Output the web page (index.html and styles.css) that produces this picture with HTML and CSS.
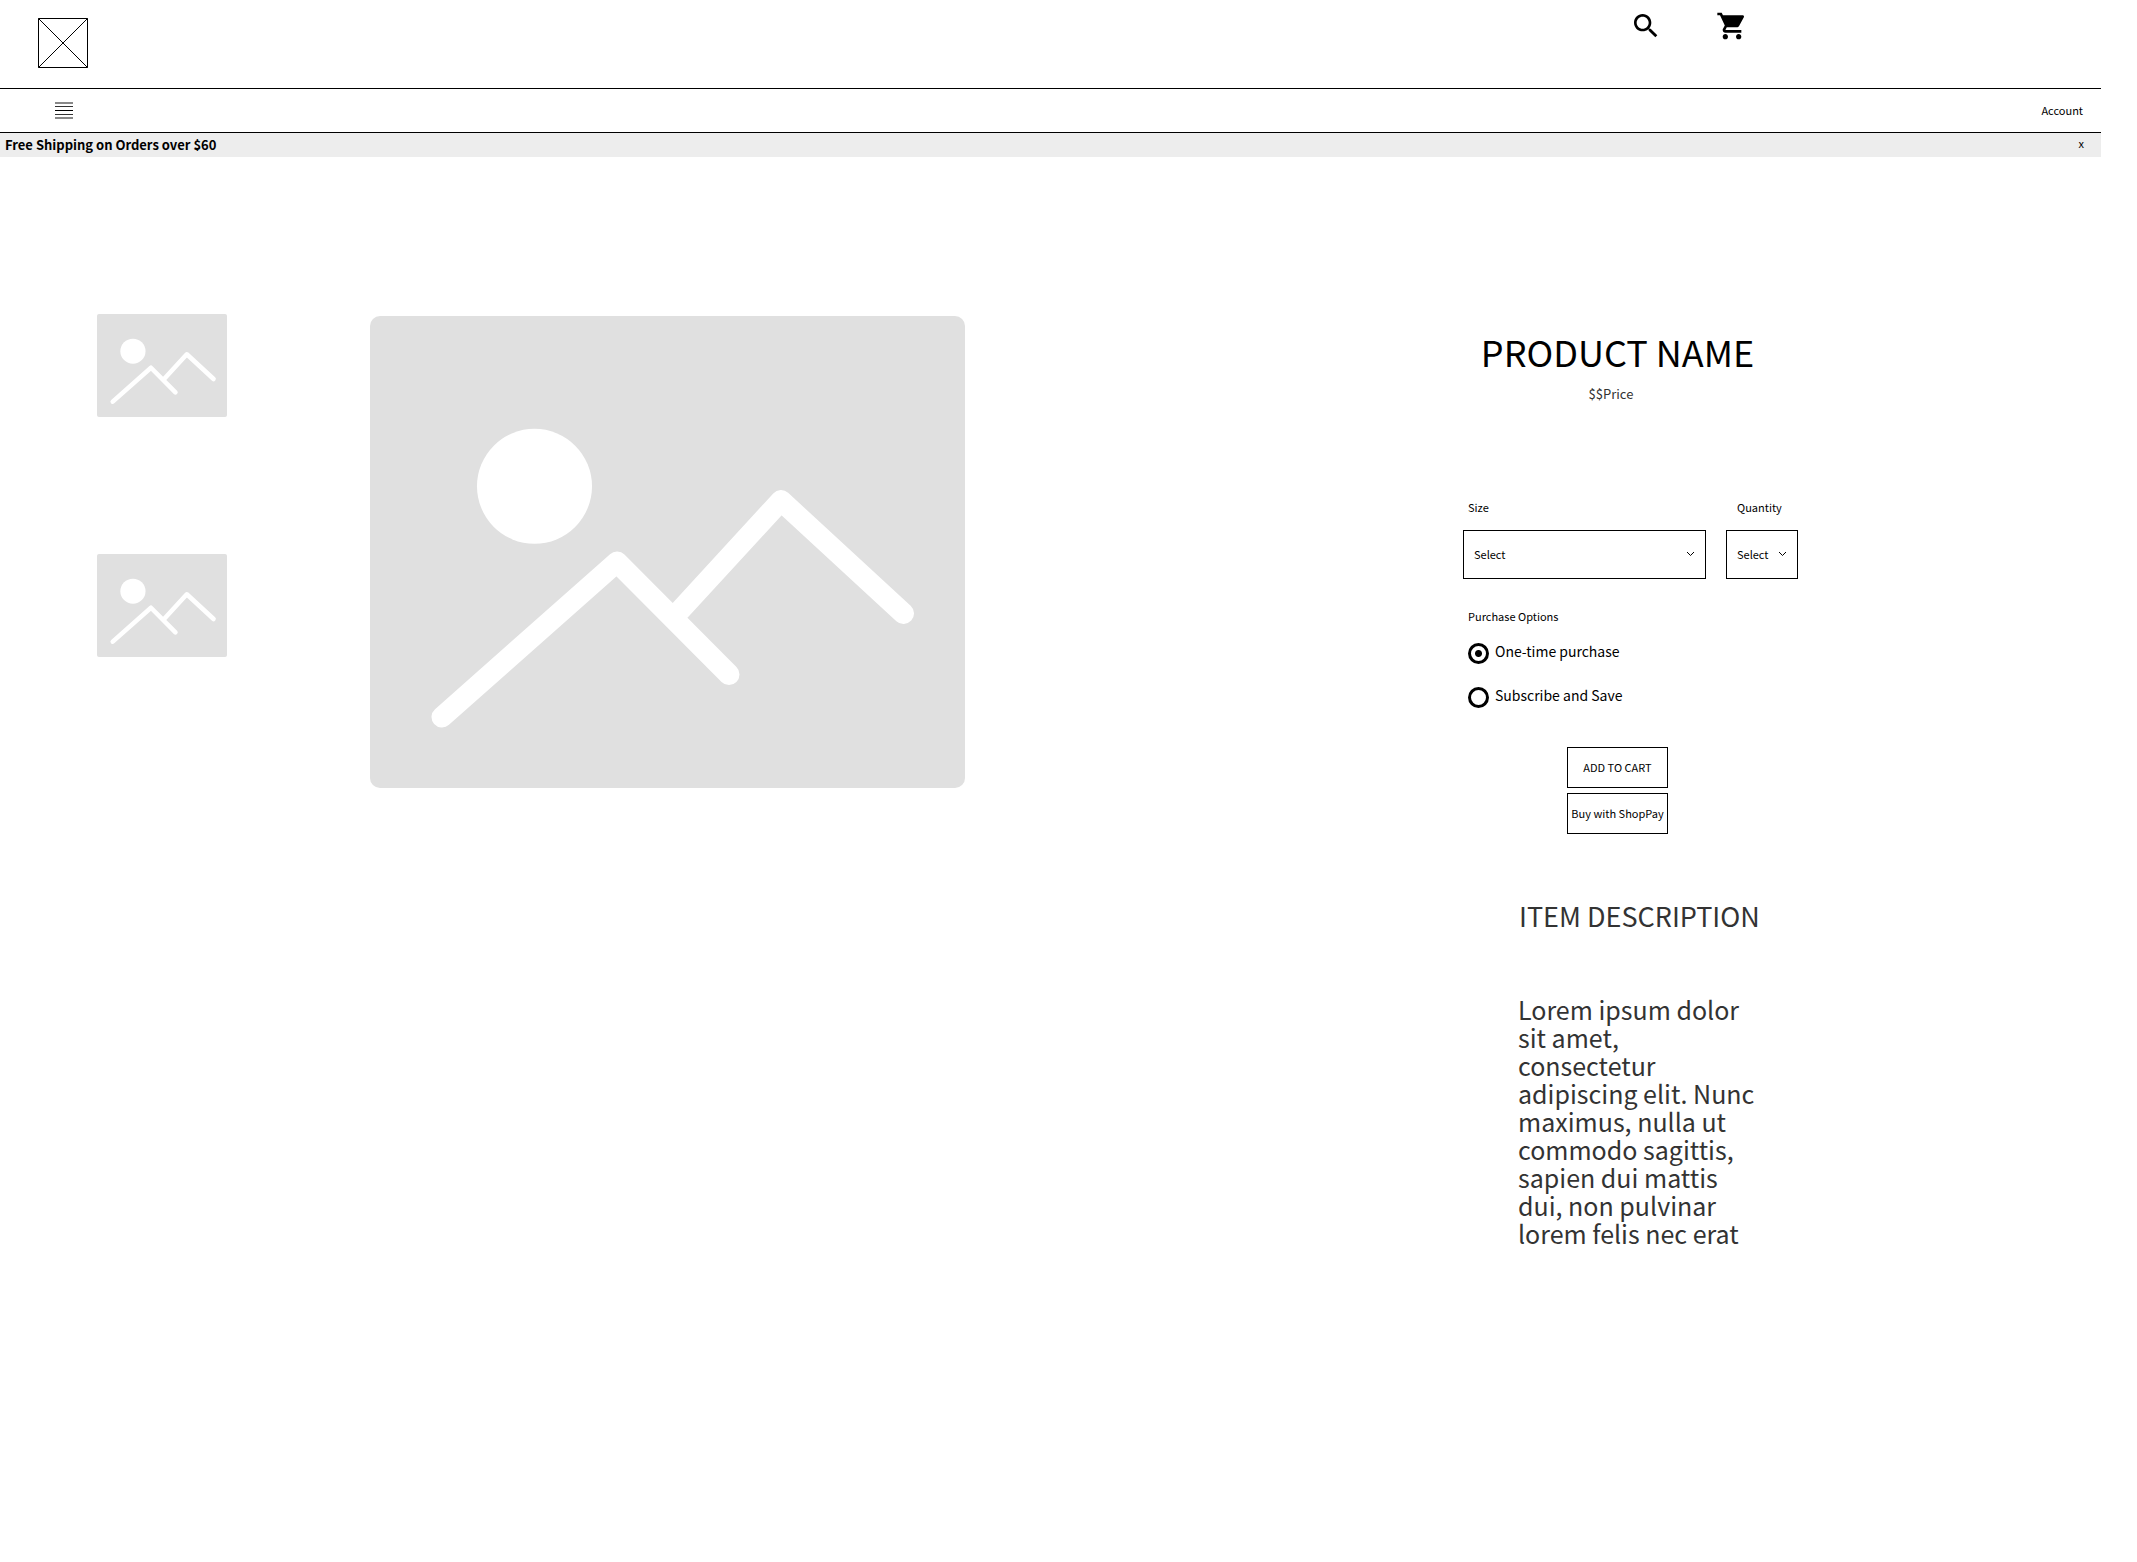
FILE: index.html
```html
<!DOCTYPE html>
<html lang="en">
<head>
<meta charset="utf-8">
<meta name="viewport" content="width=device-width, initial-scale=1">
<title>Product Name</title>
<link rel="stylesheet" href="styles.css">
</head>
<body>
<svg class="sprite" aria-hidden="true">
  <symbol id="picture" viewBox="0 0 595 472">
    <circle cx="164.500" cy="170.300" r="57.500" fill="#fff"/>
    <path d="M72 401 247 246 359 358.500M304 301 411 184.500 533.500 297.500" fill="none" stroke="#fff" stroke-width="21" stroke-linecap="round" stroke-linejoin="round"/>
  </symbol>
</svg>
<header class="header">
  <a class="logo" href="#" aria-label="Home">
    <svg width="50" height="50" viewBox="0 0 50 50" fill="none" stroke="#000"><path d="M.5.5h49v49H.5zM.5.5l49 49M49.500.5l-49 49"/></svg>
  </a>
  <div class="actions">
    <button class="icon-button" type="button" aria-label="Search">
      <svg width="32" height="32" viewBox="0 0 24 24"><path d="M15.500 14h-.79l-.28-.27C15.410 12.590 16 11.110 16 9.500 16 5.910 13.090 3 9.500 3S3 5.910 3 9.500 5.910 16 9.500 16c1.610 0 3.090-.59 4.230-1.570l.27.28v.79l5 4.990L20.490 19l-4.990-5zm-6 0C7.010 14 5 11.990 5 9.500S7.010 5 9.500 5 14 7.010 14 9.500 11.990 14 9.500 14z"/></svg>
    </button>
    <button class="icon-button" type="button" aria-label="Cart">
      <svg width="32" height="32" viewBox="0 0 24 24"><path d="M7 18c-1.100 0-1.990.9-1.990 2S5.900 22 7 22s2-.9 2-2-.9-2-2-2zM1 2v2h2l3.600 7.590-1.350 2.450c-.16.28-.25.61-.25.96 0 1.100.9 2 2 2h12v-2H7.420c-.14 0-.25-.11-.25-.25l.03-.12.9-1.630h7.450c.75 0 1.410-.41 1.750-1.030l3.580-6.490c.08-.14.12-.31.12-.48 0-.55-.45-1-1-1H5.210l-.94-2H1zm16 16c-1.100 0-1.990.9-1.990 2s.89 2 1.990 2 2-.9 2-2-.9-2-2-2z"/></svg>
    </button>
  </div>
</header>
<nav class="nav">
  <button class="icon-button" type="button" aria-label="Menu">
    <svg width="18" height="18" viewBox="0 0 18 18"><path fill="#888" d="M0 0h18v2H0zM0 15h18v2H0z"/><path fill="#333" d="M0 4h18v1H0zM0 12h18v1H0z"/><path d="M0 8h18v1H0z"/></svg>
  </button>
  <a class="account" href="#">Account</a>
</nav>
<aside class="banner">
  <strong>Free Shipping on Orders over $60</strong>
  <button class="close" type="button" aria-label="Dismiss">x</button>
</aside>
<main class="product">
  <div class="thumbs">
    <svg class="picture thumb" viewBox="0 0 595 472"><use href="#picture"/></svg>
    <svg class="picture thumb" viewBox="0 0 595 472"><use href="#picture"/></svg>
  </div>
  <svg class="picture photo" viewBox="0 0 595 472"><use href="#picture"/></svg>
  <section class="details">
    <div class="purchase">
      <h1 class="name">PRODUCT NAME</h1>
      <p class="price">$$Price</p>
    </div>
    <form class="form">
      <div class="fields">
        <div class="field">
          <label class="label" for="size">Size</label>
          <div class="select-box">
            <select class="select" id="size"><option>Select</option></select>
            <svg class="chevron" width="9" height="6" viewBox="0 0 9 6"><path d="M1 1l3.500 3.500L8 1"/></svg>
          </div>
        </div>
        <div class="field">
          <label class="label label-quantity" for="quantity">Quantity</label>
          <div class="select-box">
            <select class="select" id="quantity"><option>Select</option></select>
            <svg class="chevron" width="9" height="6" viewBox="0 0 9 6"><path d="M1 1l3.500 3.500L8 1"/></svg>
          </div>
        </div>
      </div>
      <fieldset class="options">
        <legend class="label">Purchase Options</legend>
        <div class="choices">
          <label class="choice"><input class="radio" type="radio" name="plan" checked>One-time purchase</label>
          <label class="choice"><input class="radio" type="radio" name="plan">Subscribe and Save</label>
        </div>
      </fieldset>
      <div class="buttons">
        <button class="button" type="button">ADD TO CART</button>
        <button class="button" type="button">Buy with ShopPay</button>
      </div>
    </form>
    <div class="description">
      <h2 class="subtitle">ITEM DESCRIPTION</h2>
      <p class="text">Lorem ipsum dolor sit amet, consectetur adipiscing elit. Nunc maximus, nulla ut commodo sagittis, sapien dui mattis dui, non pulvinar lorem felis nec erat</p>
    </div>
  </section>
</main>
</body>
</html>
```
FILE: styles.css
```css
* {
  box-sizing: border-box;
}

body {
  margin: 0;
  padding-right: 36px;
  background: #fff;
  color: #000;
  font-family: "Noto Sans CJK SC", "Noto Sans", sans-serif;
  font-size: 11px;
  line-height: 18px;
}

h1,
h2,
p {
  margin: 0;
  font-weight: 400;
}

a {
  color: inherit;
  text-decoration: none;
}

button,
select {
  padding: 0;
  border: 0;
  border-radius: 0;
  background: none;
  color: inherit;
  font: inherit;
}

svg {
  display: block;
}

.sprite {
  display: none;
}

.header {
  display: flex;
  align-items: flex-start;
  justify-content: space-between;
  padding: 10px 353px 20px 38px;
  border-bottom: 1px solid #000;
}

.logo {
  padding-top: 8px;
}

.actions {
  display: flex;
  gap: 54px;
}

.nav {
  display: flex;
  align-items: flex-start;
  justify-content: space-between;
  padding: 13px 18px 12px 55px;
  border-bottom: 1px solid #000;
}

.account {
  line-height: 16px;
}

.banner {
  display: flex;
  align-items: flex-start;
  justify-content: space-between;
  padding: 2px 17px 2px 5px;
  background: #ededed;
  font-size: 13px;
  line-height: 20px;
}

.close {
  font-size: 11px;
  line-height: 16px;
}

.product {
  display: flex;
  align-items: flex-start;
  padding: 157px 303px 60px 97px;
}

.picture {
  background: #e0e0e0;
}

.thumbs {
  display: flex;
  flex: none;
  flex-direction: column;
  gap: 137px;
  width: 130px;
  margin-right: 143px;
}

.thumb {
  width: 100%;
  border-radius: 2px;
}

.photo {
  flex: 0 1 595px;
  min-width: 0;
  margin-top: 2px;
  border-radius: 10px;
}

.details {
  flex: none;
  width: 335px;
  margin: 11px 0 0 auto;
}

.purchase {
  padding-right: 26px;
  text-align: center;
}

.name {
  font-size: 36px;
  line-height: 52px;
}

.price {
  margin-top: 7px;
  padding-right: 13px;
  color: #333;
  font-size: 13px;
  line-height: 20px;
}

.form {
  margin-top: 94px;
}

.fields {
  display: grid;
  grid-template-columns: 1fr 72px;
  gap: 20px;
}

.label {
  display: block;
  padding: 0 0 0 5px;
}

.label-quantity {
  padding-left: 11px;
}

.select-box {
  position: relative;
  margin-top: 14px;
}

.select {
  display: block;
  width: 100%;
  height: 49px;
  padding: 0 0 2px 10px;
  border: 1px solid #000;
  appearance: none;
}

.chevron {
  position: absolute;
  top: 21px;
  right: 11px;
  fill: none;
  stroke: #000;
  pointer-events: none;
}

.options {
  margin: 28px 0 0;
  padding: 0;
  border: 0;
}

.choices {
  display: flex;
  flex-direction: column;
  gap: 19px;
  padding: 14px 0 0 5px;
}

.choice {
  display: flex;
  align-items: flex-start;
  gap: 6px;
  font-size: 14px;
  line-height: 24px;
}

.radio {
  width: 21px;
  height: 21px;
  margin: 4px 0 0;
  border: 3px solid #000;
  border-radius: 50%;
  appearance: none;
}

.radio:checked {
  background: radial-gradient(circle, #000 3px, transparent 4px);
}

.buttons {
  display: flex;
  flex-direction: column;
  align-items: center;
  gap: 5px;
  margin-top: 39px;
  padding-right: 26px;
}

.button {
  width: 101px;
  height: 41px;
  padding-bottom: 2px;
  border: 1px solid #000;
  white-space: nowrap;
}

.description {
  width: 240px;
  margin: 62px 0 0 55px;
  color: #333;
}

.subtitle {
  padding-left: 1px;
  font-size: 27px;
  line-height: 40px;
  white-space: nowrap;
}

.text {
  margin-top: 59px;
  font-size: 25px;
  line-height: 28px;
}
```
